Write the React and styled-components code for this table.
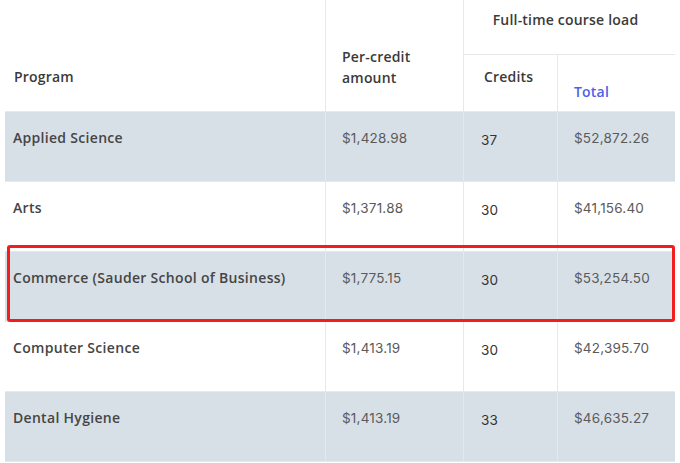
import React from "react";
import styled, { createGlobalStyle } from "styled-components";

const GlobalStyle = createGlobalStyle`
  html, body {
    margin: 0;
    padding: 0;
    background: #fff;
  }
  body {
    font-family: "Open Sans", "Noto Sans", sans-serif;
    color: #333;
  }
`;

const rows = [
  { program: "Applied Science", perCredit: "$1,428.98", credits: "37", total: "$52,872.26" },
  { program: "Arts", perCredit: "$1,371.88", credits: "30", total: "$41,156.40" },
  { program: "Commerce (Sauder School of Business)", perCredit: "$1,775.15", credits: "30", total: "$53,254.50" },
  { program: "Computer Science", perCredit: "$1,413.19", credits: "30", total: "$42,395.70" },
  { program: "Dental Hygiene", perCredit: "$1,413.19", credits: "33", total: "$46,635.27" },
];

const Page = styled.div`
  padding: 0 5px;
`;

const Frame = styled.div`
  position: relative;
  width: 670px;
`;

const Table = styled.table`
  width: 670px;
  border-collapse: separate;
  border-spacing: 0;
  table-layout: fixed;
`;

const HeadRow = styled.tr`
  height: ${(p) => p.$h}px;
`;

const Th = styled.th`
  box-sizing: border-box;
  vertical-align: top;
  text-align: ${(p) => (p.$center ? "center" : "left")};
  padding: ${(p) => p.$top}px ${(p) => p.$right || 0}px 0 ${(p) => p.$left}px;
  font-family: "Open Sans", "Noto Sans", sans-serif;
  font-size: 14px;
  font-weight: 600;
  letter-spacing: 0.2px;
  line-height: ${(p) => p.$lh || 20}px;
  color: ${(p) => (p.$link ? "#4c62e8" : "#3a3a3a")};
  border-left: ${(p) => (p.$first ? "none" : "1px solid #e8e8e8")};
  border-bottom: 1px solid #e8e8e8;
`;

const BodyRow = styled.tr`
  height: 70px;
  background: ${(p) => (p.$shaded ? "#d8e0e7" : "#fff")};
`;

const Td = styled.td`
  box-sizing: border-box;
  vertical-align: top;
  padding: ${(p) => p.$top || 16}px 0 0 ${(p) => p.$left}px;
  border-left: ${(p) => (p.$first ? "none" : "1px solid #e8e8e8")};
  border-bottom: 1px solid #e8e8e8;
  font-size: 14px;
  line-height: 20px;
  white-space: nowrap;
`;

const ProgramName = styled.span`
  font-family: "Open Sans", "Noto Sans", sans-serif;
  font-weight: 600;
  letter-spacing: 0.3px;
  color: #454545;
`;

const Amount = styled.span`
  font-family: Inter, "Noto Sans", sans-serif;
  font-size: 13.5px;
  letter-spacing: 0.2px;
  color: ${(p) => (p.$dark ? "#333" : "#5a5a5a")};
`;

const Highlight = styled.div`
  position: absolute;
  left: 2px;
  top: 245px;
  width: 668px;
  height: 77px;
  box-sizing: border-box;
  border: 3px solid #f21d1d;
  border-radius: 3px;
  pointer-events: none;
`;

export default function App() {
  return (
    <Page>
      <GlobalStyle />
      <Frame>
        <Table>
          <colgroup>
            <col style={{ width: 320 }} />
            <col style={{ width: 138 }} />
            <col style={{ width: 94 }} />
            <col style={{ width: 118 }} />
          </colgroup>
          <thead>
            <HeadRow $h={55}>
              <Th rowSpan={2} $first $top={67} $left={9}>
                Program
              </Th>
              <Th rowSpan={2} $top={46} $left={16} $lh={21}>
                Per-credit
                <br />
                amount
              </Th>
              <Th colSpan={2} $center $top={10} $left={0} $right={8}>
                Full-time course load
              </Th>
            </HeadRow>
            <HeadRow $h={57}>
              <Th $top={12} $left={20}>
                Credits
              </Th>
              <Th $top={27} $left={16} $link>
                Total
              </Th>
            </HeadRow>
          </thead>
          <tbody>
            {rows.map((r, i) => (
              <BodyRow key={r.program} $shaded={i % 2 === 0}>
                <Td $first $left={8}>
                  <ProgramName>{r.program}</ProgramName>
                </Td>
                <Td $left={16}>
                  <Amount>{r.perCredit}</Amount>
                </Td>
                <Td $left={17} $top={18}>
                  <Amount $dark>{r.credits}</Amount>
                </Td>
                <Td $left={16}>
                  <Amount>{r.total}</Amount>
                </Td>
              </BodyRow>
            ))}
          </tbody>
        </Table>
        <Highlight />
      </Frame>
    </Page>
  );
}
